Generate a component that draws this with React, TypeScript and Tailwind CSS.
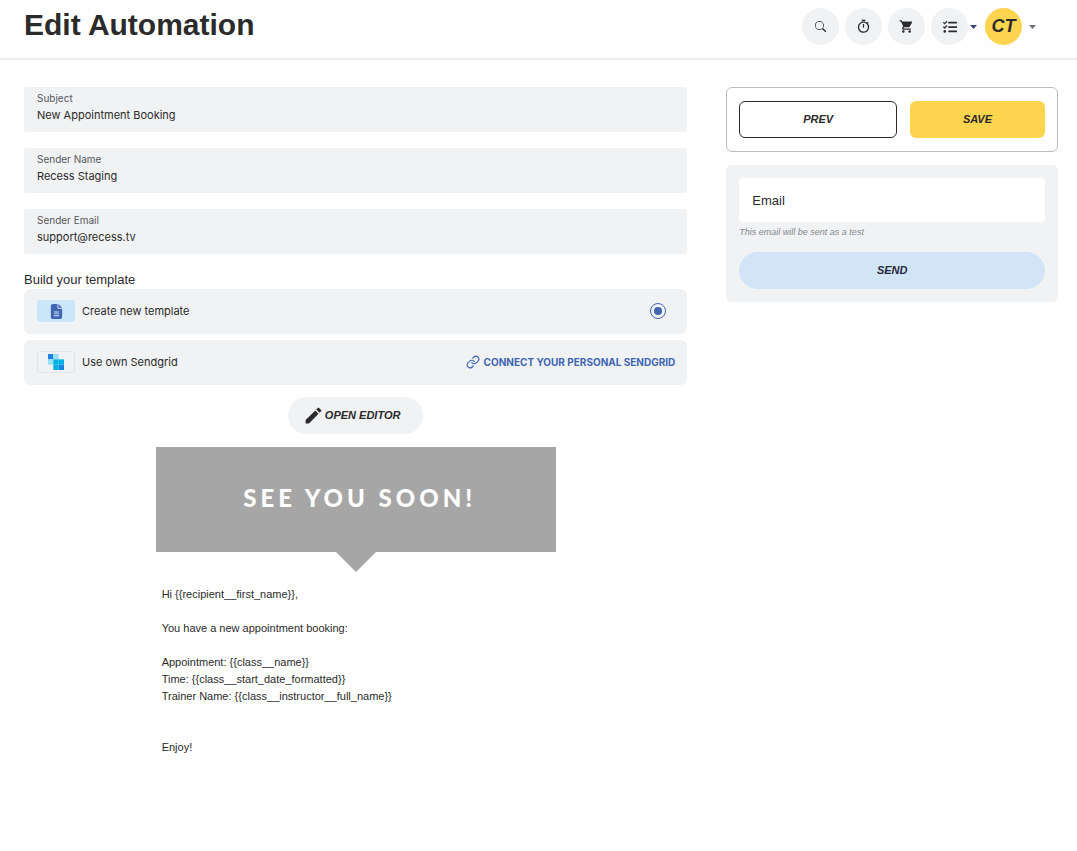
import { useState } from 'react';
import type { ReactNode } from 'react';
import { FaTasks } from 'react-icons/fa';
import { FaFileLines } from 'react-icons/fa6';
import { BsSearch } from 'react-icons/bs';
import { FiLink } from 'react-icons/fi';
import { MdEdit, MdOutlineTimer, MdShoppingCart } from 'react-icons/md';

function RoundButton({ label, children }: { label: string; children: ReactNode }) {
  return (
    <button
      type="button"
      aria-label={label}
      className="flex size-[37px] items-center justify-center rounded-full bg-[#f1f2f4]"
    >
      {children}
    </button>
  );
}

function Caret({ className }: { className: string }) {
  return (
    <svg viewBox="0 0 7 4" fill="currentColor" className={className}>
      <path d="M0 0H7L3.5 4Z" />
    </svg>
  );
}

function Field({ id, label, value, onChange }: { id: string; label: string; value: string; onChange: (v: string) => void }) {
  return (
    <div className="flex h-[45px] flex-col rounded-[3px] bg-[#f1f2f4] px-[13px] pt-1">
      <label htmlFor={id} className="text-[10px] leading-[15px] text-[#55585c]">
        {label}
      </label>
      <input
        id={id}
        type="text"
        value={value}
        onChange={(e) => onChange(e.target.value)}
        className="w-full bg-transparent text-[11px] leading-[18px] outline-none"
      />
    </div>
  );
}

function SendgridLogo() {
  return (
    <svg viewBox="0 0 48 48" className="size-4">
      <rect x="0" y="0" width="16" height="16" fill="#1a82e2" />
      <rect x="16" y="0" width="16" height="16" fill="#99e1f4" />
      <rect x="0" y="16" width="16" height="16" fill="#99e1f4" />
      <rect x="16" y="16" width="16" height="16" fill="#00b2e3" />
      <rect x="32" y="16" width="16" height="16" fill="#00b2e3" />
      <rect x="16" y="32" width="16" height="16" fill="#00b2e3" />
      <rect x="32" y="32" width="16" height="16" fill="#1a82e2" />
    </svg>
  );
}

export default function App() {
  const [subject, setSubject] = useState('New Appointment Booking');
  const [senderName, setSenderName] = useState('Recess Staging');
  const [senderEmail, setSenderEmail] = useState('support@recess.tv');
  const [template, setTemplate] = useState('new');
  const [testEmail, setTestEmail] = useState('');

  return (
    <div className="min-h-screen bg-white font-['Inter','Liberation_Sans',sans-serif] text-[11px] text-[#2b2b2b]">
      <header className="flex h-[60px] items-start justify-between border-b-2 border-[#ececec] pt-2 pr-[41px] pl-6 font-['Liberation_Sans',sans-serif]">
        <h1 className="text-[30px] leading-[34px] font-bold">Edit Automation</h1>

        <div className="flex items-center gap-[6px]">
          <RoundButton label="Search">
            <BsSearch className="size-[11px]" />
          </RoundButton>
          <RoundButton label="Timer">
            <MdOutlineTimer className="size-[15px]" />
          </RoundButton>
          <RoundButton label="Cart">
            <MdShoppingCart className="size-[15px]" />
          </RoundButton>
          <div className="flex items-center">
            <RoundButton label="Tasks">
              <FaTasks className="size-[14px]" />
            </RoundButton>
            <Caret className="mx-[2px] h-1 w-[7px] text-[#3c4577]" />
          </div>
          <button type="button" aria-label="Account menu" className="flex items-center gap-[7px]">
            <span className="flex size-[37px] items-center justify-center rounded-full bg-[#ffd54f] text-[18px] font-bold italic">
              CT
            </span>
            <Caret className="h-1 w-[7px] text-[#6b7080]" />
          </button>
        </div>
      </header>

      <main className="grid grid-cols-[2fr_1fr] items-start gap-[39px] pt-[27px] pr-[19px] pl-6">
        <section>
          <div className="flex flex-col gap-4">
            <Field id="subject" label="Subject" value={subject} onChange={setSubject} />
            <Field id="sender-name" label="Sender Name" value={senderName} onChange={setSenderName} />
            <Field id="sender-email" label="Sender Email" value={senderEmail} onChange={setSenderEmail} />
          </div>

          <h2 className="mt-4 font-['Liberation_Sans',sans-serif] text-[13px] leading-[19px]">Build your template</h2>

          <div className="flex flex-col gap-[6px]">
            <label className="flex h-[45px] items-center rounded-md bg-[#f1f2f4] pr-[21px] pb-px pl-[13px]">
              <span className="mr-[7px] flex h-[22px] w-[38px] items-center justify-center rounded-[3px] bg-[#cbe6f9] text-[#4066b3]">
                <FaFileLines className="size-[15px]" />
              </span>
              <span>Create new template</span>
              <input
                type="radio"
                name="template"
                checked={template === 'new'}
                onChange={() => setTemplate('new')}
                className="ml-auto size-4 appearance-none rounded-full border border-[#4066b3] bg-clip-content p-[3px] checked:bg-[#4066b3]"
              />
            </label>

            <div className="flex h-[45px] items-center rounded-md bg-[#f1f2f4] pr-3 pb-px pl-[13px]">
              <span className="mr-[7px] flex h-[22px] w-[38px] items-center justify-center rounded-[3px] border border-[#e2e4e7]">
                <SendgridLogo />
              </span>
              <span>Use own Sendgrid</span>
              <a href="#sendgrid" className="ml-auto flex items-center gap-1 text-[10px] font-bold text-[#4066b3]">
                <FiLink className="size-[14px]" />
                CONNECT YOUR PERSONAL SENDGRID
              </a>
            </div>
          </div>

          <div className="mt-3 flex justify-center">
            <button
              type="button"
              className="flex h-[37px] items-center gap-px rounded-full bg-[#f1f2f4] pr-[23px] pl-[15px] font-['Liberation_Sans',sans-serif] font-bold italic"
            >
              <MdEdit className="size-[21px]" />
              OPEN EDITOR
            </button>
          </div>

          <article className="mx-auto mt-[13px] max-w-[400px] font-['Liberation_Sans',sans-serif]">
            <div className="flex h-[105px] items-center justify-center bg-[#a6a6a6] pb-1 pl-2 font-['Lato',sans-serif] text-[24px] font-black tracking-[4px] text-white">
              SEE YOU SOON!
            </div>
            <svg viewBox="0 0 40 20" className="mx-auto h-5 w-10">
              <path d="M0 0H40L20 20Z" fill="#a6a6a6" />
            </svg>
            <div className="px-[6px] pt-[14px] leading-[17px]">
              <p>Hi {'{{recipient__first_name}}'},</p>
              <p className="mt-[17px]">You have a new appointment booking:</p>
              <p className="mt-[17px]">Appointment: {'{{class__name}}'}</p>
              <p>Time: {'{{class__start_date_formatted}}'}</p>
              <p>Trainer Name: {'{{class__instructor__full_name}}'}</p>
              <p className="mt-[34px]">Enjoy!</p>
            </div>
          </article>
        </section>

        <aside className="flex flex-col gap-[13px] font-['Liberation_Sans',sans-serif]">
          <div className="grid grid-cols-[7fr_6fr] gap-[13px] rounded-md border border-[#bdbdbd] px-3 py-[13px]">
            <button type="button" className="h-[37px] rounded-md border border-[#2b2b2b] font-bold italic">
              PREV
            </button>
            <button type="button" className="h-[37px] rounded-md bg-[#ffd54f] font-bold italic">
              SAVE
            </button>
          </div>

          <div className="rounded-md bg-[#f1f2f4] p-[13px]">
            <input
              type="email"
              aria-label="Email"
              placeholder="Email"
              value={testEmail}
              onChange={(e) => setTestEmail(e.target.value)}
              className="block h-11 w-full rounded-[2px] bg-white px-[13px] text-[13px] outline-none placeholder:text-[#2b2b2b]"
            />
            <p className="mt-[3px] text-[9px] leading-[14px] text-[#85888c] italic">This email will be sent as a test</p>
            <button type="button" className="mt-[13px] h-[37px] w-full rounded-full bg-[#d1e5f6] font-bold text-[#26283d] italic">
              SEND
            </button>
          </div>
        </aside>
      </main>
    </div>
  );
}
